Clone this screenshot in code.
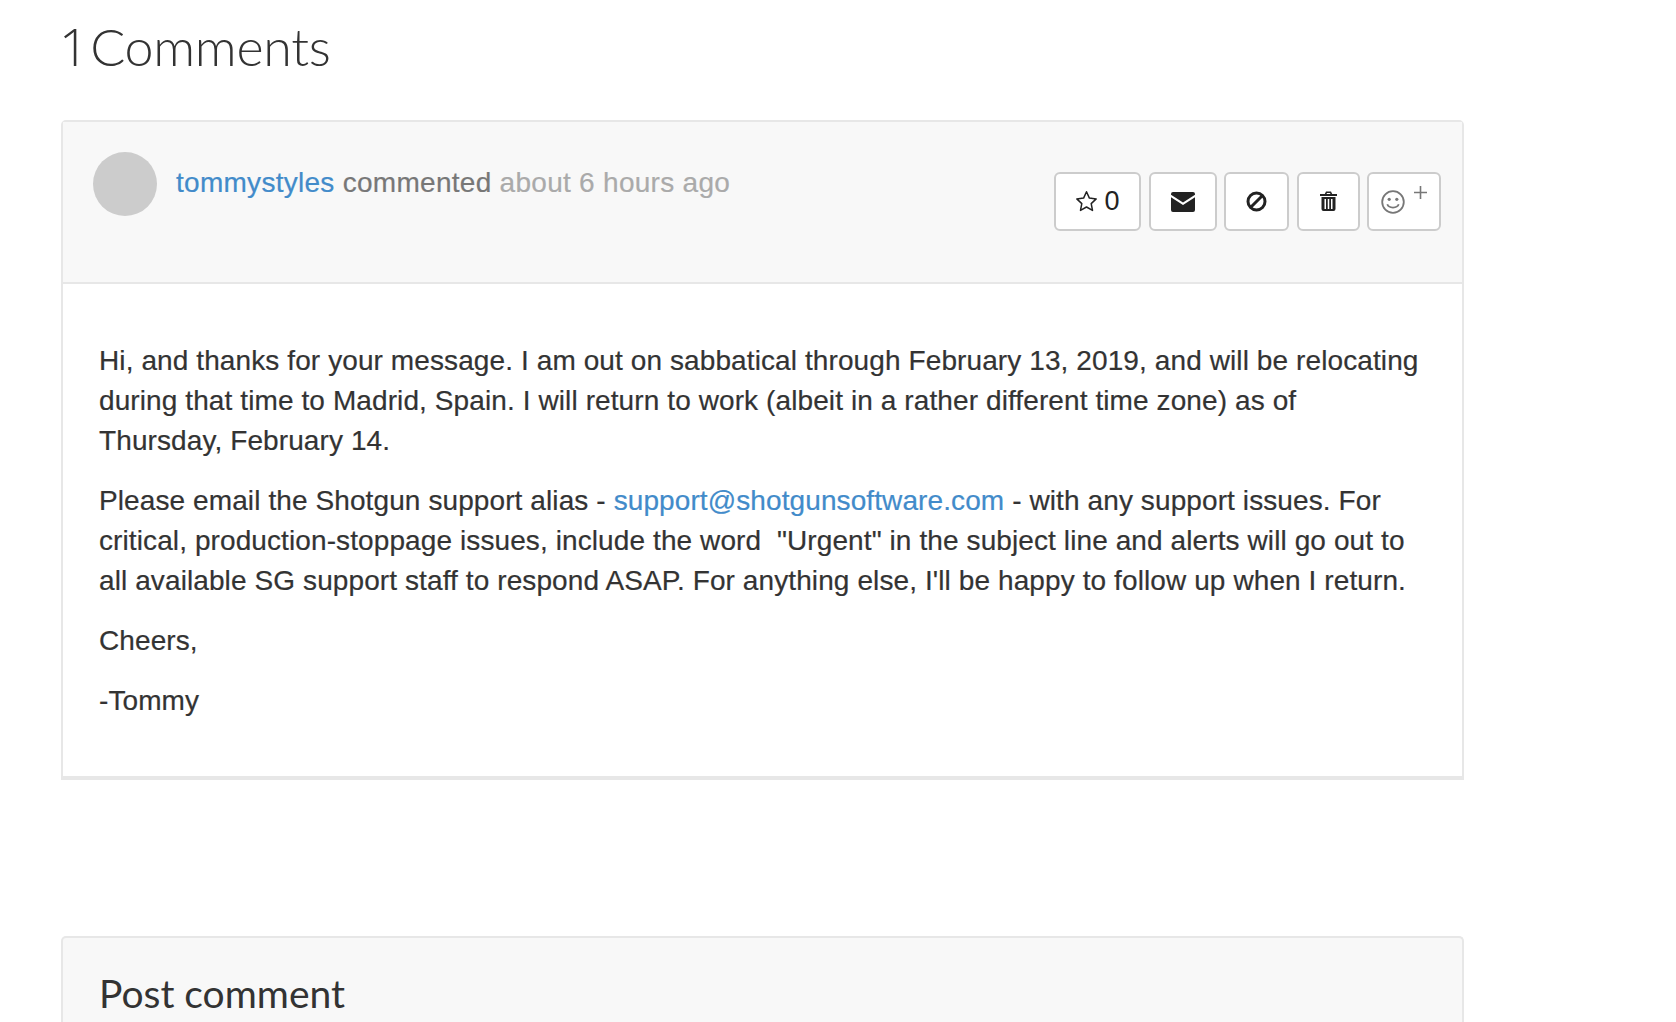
<div class="page">
  <h2><span class="num">1</span> Comments</h2>

  <div class="panel comment">
    <div class="panel-heading">
      <div class="avatar"></div>
      <div class="meta">
        <a href="#u">tommystyles</a>
        <span class="verb">commented</span>
        <span class="time">about 6 hours ago</span>
      </div>
      <div class="actions">
        <button class="btn star">
          <svg width="23" height="22" viewBox="0 0 23 22"><path d="M11.500 1.800l2.900 6.300 6.800.8-5 4.700 1.300 6.800-6-3.400-6 3.400 1.300-6.800-5-4.700 6.800-.8z" fill="none" stroke="#222" stroke-width="1.500" stroke-linejoin="round"/></svg>
          <span>0</span>
        </button>
        <button class="btn mail">
          <svg width="24" height="20" viewBox="0 0 24 20"><path d="M2 0h20a2 2 0 0 1 2 2v.8L12 10.500 0 2.800V2a2 2 0 0 1 2-2zM0 5.300l12 7.700 12-7.700V18a2 2 0 0 1-2 2H2a2 2 0 0 1-2-2z" fill="#222"/></svg>
        </button>
        <button class="btn ban">
          <svg width="21" height="21" viewBox="0 0 21 21"><circle cx="10.500" cy="10.500" r="8.500" fill="none" stroke="#222" stroke-width="3"/><path d="M4.500 16.500l12-12" stroke="#222" stroke-width="3"/></svg>
        </button>
        <button class="btn trash">
          <svg width="17" height="20" viewBox="0 0 17 20"><path d="M6 .5h5l1.200 2.500H17v2H0V3h4.800zM7 2l-.5 1h4L10 2zM1.500 6h14v12a2 2 0 0 1-2 2h-10a2 2 0 0 1-2-2zM4.500 8v10h1.500V8zM7.750 8v10h1.500V8zM11 8v10h1.500V8z" fill="#222" fill-rule="evenodd"/></svg>
        </button>
        <button class="btn smile">
          <svg width="24" height="24" viewBox="0 0 24 24"><circle cx="12" cy="12" r="10.800" fill="none" stroke="#777" stroke-width="1.800"/><circle cx="8.200" cy="9.300" r="1.600" fill="#777"/><circle cx="15.800" cy="9.300" r="1.600" fill="#777"/><path d="M6.300 14.300c1.500 4.300 9.900 4.300 11.400 0" fill="none" stroke="#777" stroke-width="1.800"/></svg>
          <svg class="plus" width="13" height="13" viewBox="0 0 13 13"><path d="M6.500 0v13M0 6.500h13" stroke="#777" stroke-width="1.600"/></svg>
        </button>
      </div>
    </div>
    <div class="panel-body">
      <p>Hi, and thanks for your message. I am out on sabbatical through February 13, 2019, and will be relocating during that time to Madrid, Spain. I will return to work (albeit in a rather different time zone) as of<br />Thursday, February 14.</p>
      <p>Please email the Shotgun support alias - <a href="#m">support@shotgunsoftware.com</a> - with any support issues. For critical, production-stoppage issues, include the word&nbsp; "Urgent" in the subject line and alerts will go out to all available SG support staff to respond ASAP. For anything else, I'll be happy to follow up when I return.</p>
      <p>Cheers,</p>
      <p>-Tommy</p>
    </div>
  </div>

  <div class="panel post">
    <h3>Post comment</h3>
  </div>
</div>

<style>
  :global(body) {
    margin: 0;
    background: #fff;
    overflow: hidden;
  }
  .page {
    height: 1022px;
    overflow: hidden;
    padding-left: 61px;
    width: 1403px;
    font-family: "Liberation Sans", Arial, sans-serif;
    color: #333;
  }
  h2 {
    margin: 0;
    padding-top: 14px;
    height: 104px;
    box-sizing: border-box;
    font-family: Lato, sans-serif;
    font-weight: 300;
    font-size: 52px;
    line-height: 64px;
    letter-spacing: -0.3px;
    word-spacing: -14px;
    color: #333;
  }
  .num {
    font-family: "Open Sans", sans-serif;
    margin-left: -2px;
    margin-right: 2px;
  }
  .panel {
    border: 2px solid #e7e7e7;
    border-radius: 5px;
    box-sizing: border-box;
  }
  .comment {
    margin-top: 16px;
    height: 660px;
    border-bottom-width: 4px;
    border-bottom-left-radius: 0;
    border-bottom-right-radius: 0;
  }
  .panel-heading {
    background: #f8f8f8;
    border-bottom: 2px solid #e7e7e7;
    height: 162px;
    box-sizing: border-box;
    display: flex;
    padding: 30px 21px 0 30px;
  }
  .avatar {
    width: 64px;
    height: 64px;
    border-radius: 50%;
    background: #ccc;
  }
  .meta {
    flex: 1;
    margin-left: 19px;
    font-size: 28px;
    line-height: 62px;
    color: #777;
    letter-spacing: 0.28px;
    -webkit-text-stroke: 0.2px;
  }
  .time {
    color: #aaa;
  }
  a {
    color: #428bca;
    text-decoration: none;
  }
  .actions {
    display: flex;
    gap: 7.5px;
    padding-top: 20px;
  }
  .btn {
    height: 59px;
    box-sizing: border-box;
    border: 2px solid #ccc;
    border-radius: 6px;
    background: #fff;
    display: flex;
    align-items: center;
    justify-content: center;
    padding: 0;
    font-family: "Liberation Sans", sans-serif;
    font-size: 27px;
    color: #222;
    gap: 6px;
    -webkit-text-stroke: 0;
  }
  .star { width: 87px; }
  .star svg { margin-top: -2px; }
  .mail { width: 68px; }
  .ban { width: 65px; }
  .trash { width: 63px; }
  .trash svg { margin-top: -2px; }
  .smile {
    width: 74px;
    gap: 9px;
    justify-content: flex-start;
    padding-left: 12px;
  }
  .plus {
    margin-top: -19px;
  }
  .panel-body {
    padding: 57px 36px 0 36px;
    font-size: 28px;
    line-height: 40px;
    color: #333;
    letter-spacing: 0.1px;
    -webkit-text-stroke: 0.2px;
  }
  .panel-body p {
    margin: 0 0 20px;
  }
  .post {
    margin-top: 156px;
    background: #f8f8f8;
    height: 200px;
    padding: 30px 36px;
    border-bottom: none;
  }
  h3 {
    margin: 0;
    font-family: Lato, sans-serif;
    font-weight: 400;
    font-size: 39px;
    line-height: 50px;
    color: #333;
  }
</style>
